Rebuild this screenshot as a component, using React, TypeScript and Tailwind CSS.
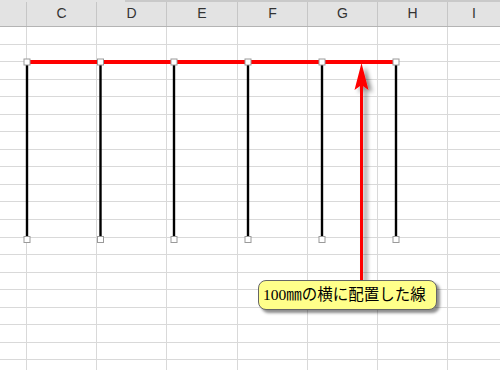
import React from "react";

const columns = [
  { label: "", width: "w-[27px]" },
  { label: "C", width: "w-[70px]" },
  { label: "D", width: "w-[70px]" },
  { label: "E", width: "w-[71px]" },
  { label: "F", width: "w-[70px]" },
  { label: "G", width: "w-[70px]" },
  { label: "H", width: "w-[70px]" },
  { label: "I", width: "flex-1" },
];

const rows = Array.from({ length: 20 }, (_, i) => i);
const posts = [27, 100.5, 174, 248, 322, 396];

function Handle({ x, y }: { x: number; y: number }) {
  return <rect x={x - 3} y={y - 3} width={6} height={6} fill="#ffffff" stroke="#9a9a9a" strokeWidth={1} />;
}

function Drawing() {
  return (
    <svg className="absolute left-0 top-0" width={500} height={370} viewBox="0 0 500 370">
      <defs>
        <filter id="arrowShadow" x="-50%" y="-10%" width="200%" height="130%">
          <feDropShadow dx={4} dy={3} stdDeviation={2.2} floodColor="#000" floodOpacity={0.45} />
        </filter>
      </defs>
      {posts.map((x) => (
        <line key={x} x1={x} y1={62} x2={x} y2={239.5} stroke="#000" strokeWidth={2.4} />
      ))}
      <line x1={27} y1={62} x2={396} y2={62} stroke="#ff0000" strokeWidth={4} />
      <g filter="url(#arrowShadow)">
        <line x1={361.5} y1={84} x2={361.5} y2={282} stroke="#ff0000" strokeWidth={3} />
        <polygon points="361.5,63 368.5,90 361.5,85 354.5,90" fill="#ff0000" />
      </g>
      {posts.map((x) => (
        <Handle key={`t${x}`} x={x} y={62} />
      ))}
      {posts.map((x) => (
        <Handle key={`b${x}`} x={x} y={239.5} />
      ))}
    </svg>
  );
}

export default function App() {
  return (
    <div className="relative h-[370px] w-[500px] overflow-hidden bg-white font-['Liberation_Sans',sans-serif]">
      <div className="flex h-[27px] flex-col border-b border-[#b4b4b4] bg-[#e3e3e3]">
        <div className="flex h-[2px]">
          <div className="w-[125px]" />
          <div className="flex-1 bg-[#c9c9c9]" />
        </div>
        <div className="flex flex-1">
          {columns.map((col, i) => (
            <div
              key={i}
              className={`${col.width} flex shrink-0 items-end justify-center pb-[2px] text-[14px] text-[#333] ${
                i < columns.length - 1 ? "border-r border-[#c6c6c6]" : ""
              }`}
            >
              {col.label}
            </div>
          ))}
        </div>
      </div>
      {rows.map((r) => (
        <div key={r} className="flex h-[17.55px] border-b border-[#d9d9d9]">
          {columns.map((col, i) => (
            <div
              key={i}
              className={`${col.width} shrink-0 ${i < columns.length - 1 ? "border-r border-[#d9d9d9]" : ""}`}
            />
          ))}
        </div>
      ))}
      <Drawing />
      <div className="absolute left-[258px] top-[280px] flex h-[30px] w-[179px] items-center rounded-[8px] border border-[#666] bg-[#ffff8a] pl-[4px] font-[family-name:'Liberation_Serif','Noto_Sans_CJK_JP',serif] text-[15.5px] leading-none text-black shadow-[3px_3px_3px_rgba(0,0,0,0.45)]">
        100㎜の横に配置した線
      </div>
    </div>
  );
}
